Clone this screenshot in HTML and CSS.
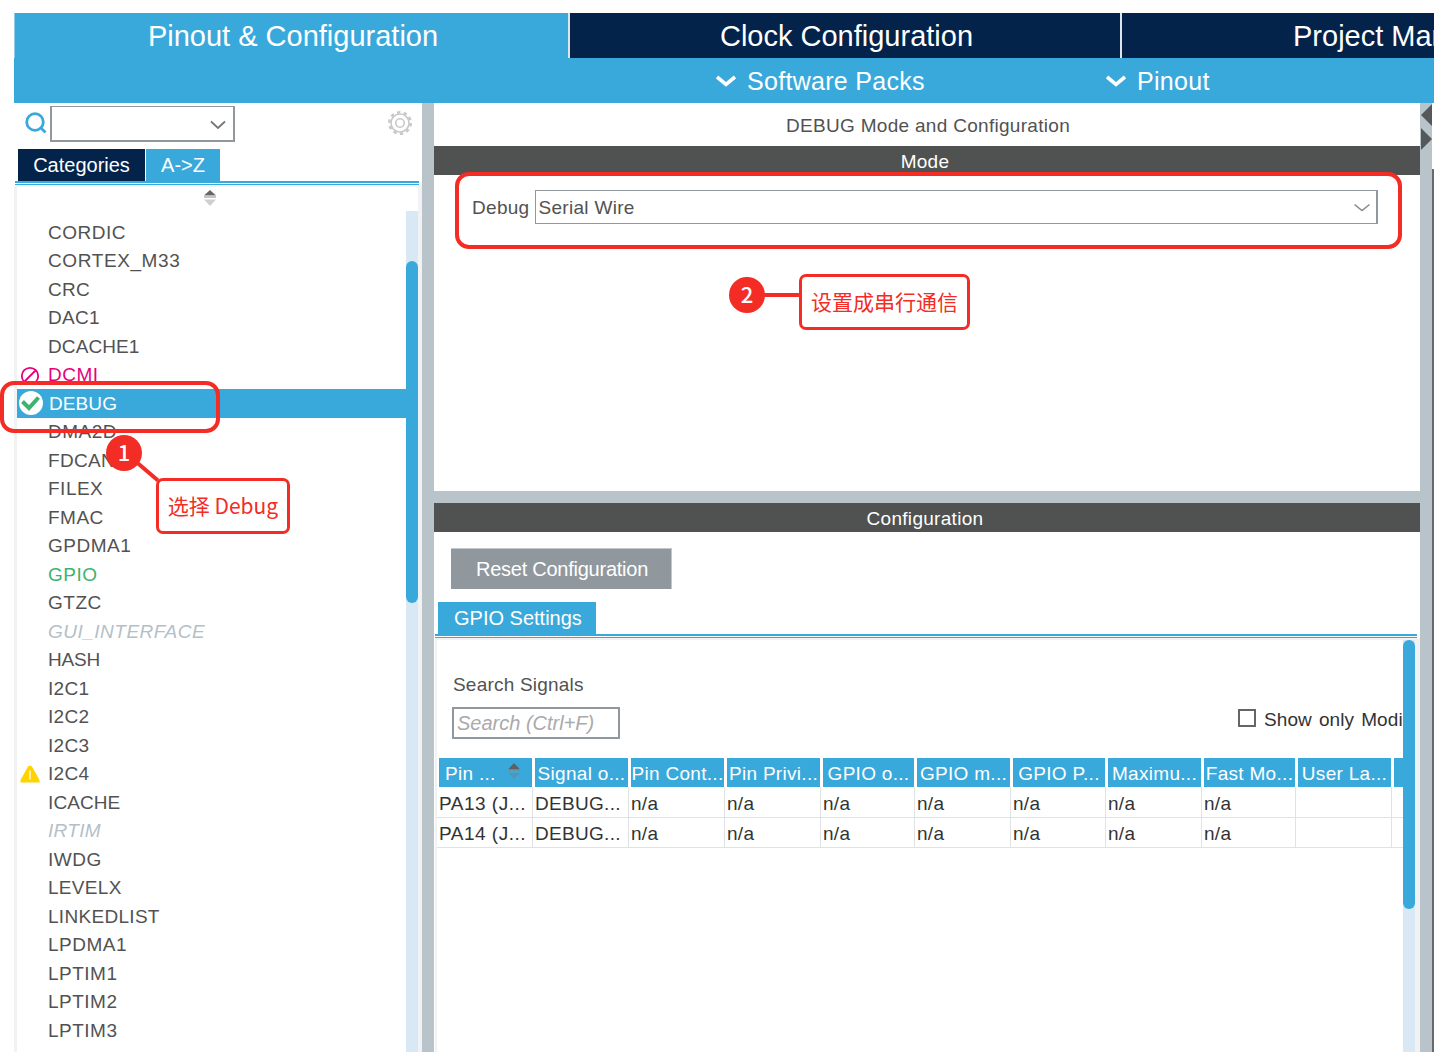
FILE: index.html
```html
<!DOCTYPE html>
<html lang="zh-CN">

<head>
    <meta charset="UTF-8">
    <title>Pinout &amp; Configuration</title>
    <link rel="stylesheet" href="styles.css">
</head>

<body>
    <div class="window">
        <div class="main-tabs">
            <div class="main-tab active">Pinout &amp; Configuration</div>
            <div class="main-tab clock">Clock Configuration</div>
            <div class="main-tab project">Project Manager</div>
        </div>
        <div class="sub-bar">
            <div class="menu packs">
                <svg width="20" height="13" viewBox="0 0 20 13"><path d="M1 2 L10 9.5 L19 2" fill="none" stroke="#fff" stroke-width="3.6"/></svg>
                <span>Software Packs</span>
            </div>
            <div class="menu">
                <svg width="20" height="13" viewBox="0 0 20 13"><path d="M1 2 L10 9.5 L19 2" fill="none" stroke="#fff" stroke-width="3.6"/></svg>
                <span>Pinout</span>
            </div>
        </div>

        <div class="panes">
            <div class="left">
                <div class="finder">
                    <svg class="magnifier" width="22" height="22" viewBox="0 0 22 22"><circle cx="10" cy="10" r="8.3" fill="none" stroke="#39a9dc" stroke-width="2.8"/><path d="M15 15 L20.5 20.5" stroke="#39a9dc" stroke-width="2.6"/></svg>
                    <div class="finder-box">
                        <svg width="16" height="10" viewBox="0 0 16 10"><path d="M1 1.5 L8 8 L15 1.5" fill="none" stroke="#777" stroke-width="1.8"/></svg>
                    </div>
                    <svg class="gear" width="26" height="26" viewBox="-13 -13 26 26"><circle r="9" fill="none" stroke="#c9c9c9" stroke-width="1.6"/><circle r="10.7" fill="none" stroke="#c9c9c9" stroke-width="2.6" stroke-dasharray="3.4 3.323"/><circle r="4.2" fill="none" stroke="#c9c9c9" stroke-width="1.6"/></svg>
                </div>
                <div class="small-tabs">
                    <div class="small-tab navy">Categories</div>
                    <div class="small-tab">A-&gt;Z</div>
                </div>
                <div class="tab-lines"></div>
                <div class="list-area">
                    <div class="sorter">
                        <svg width="14" height="17" viewBox="0 0 14 17"><path d="M7 0 L13 5.5 H1 Z" fill="#666"/><path d="M1 5.5 H13 V8 H1 Z" fill="#c4c4c4"/><path d="M1 9.5 H13 L7 16 Z" fill="#d0d0d0"/></svg>
                    </div>
                    <div class="scroll-row">
                        <div class="list">
                            <div class="item s4">CORDIC</div>
                            <div class="item s5">CORTEX_M33</div>
                            <div class="item">CRC</div>
                            <div class="item">DAC1</div>
                            <div class="item s1">DCACHE1</div>
                            <div class="item s4 pink"><svg class="mark" width="20" height="20" viewBox="0 0 20 20"><circle cx="10" cy="10" r="8.2" fill="none" stroke="#e6007e" stroke-width="1.8"/><path d="M4 16 L16 4" stroke="#e6007e" stroke-width="1.8"/></svg>DCMI</div>
                            <div class="item s1 selected"><svg class="mark check" width="24" height="24" viewBox="0 0 24 24"><circle cx="12" cy="12" r="12" fill="#fff"/><path d="M3.5 10.5 L10 17 L19.5 6.5" fill="none" stroke="#3cb371" stroke-width="4"/></svg>DEBUG</div>
                            <div class="item s4">DMA2D</div>
                            <div class="item">FDCAN1</div>
                            <div class="item s4">FILEX</div>
                            <div class="item s4">FMAC</div>
                            <div class="item s4">GPDMA1</div>
                            <div class="item s4 green">GPIO</div>
                            <div class="item s4">GTZC</div>
                            <div class="item s4 off">GUI_INTERFACE</div>
                            <div class="item s0">HASH</div>
                            <div class="item">I2C1</div>
                            <div class="item">I2C2</div>
                            <div class="item">I2C3</div>
                            <div class="item"><svg class="mark" width="20" height="18" viewBox="0 0 20 18"><path d="M10 0.5 L12 1.5 L19.5 15 V17.5 H0.5 V15 L8 1.5 Z" fill="#ffd200"/><path d="M10 5.5 V14.5" stroke="#fff" stroke-width="1.3"/></svg>I2C4</div>
                            <div class="item s1">ICACHE</div>
                            <div class="item off">IRTIM</div>
                            <div class="item s4">IWDG</div>
                            <div class="item">LEVELX</div>
                            <div class="item">LINKEDLIST</div>
                            <div class="item s4">LPDMA1</div>
                            <div class="item s4">LPTIM1</div>
                            <div class="item s4">LPTIM2</div>
                            <div class="item s4">LPTIM3</div>
                        </div>
                        <div class="track"><div class="thumb"></div></div>
                    </div>
                </div>
            </div>

            <div class="divider"></div>

            <div class="center">
                <div class="title">DEBUG Mode and Configuration</div>
                <div class="bar mode-bar">Mode</div>
                <div class="mode">
                    <span>Debug</span>
                    <div class="select">
                        <span>Serial Wire</span>
                        <svg width="16" height="9" viewBox="0 0 16 9"><path d="M0.5 1.5 L8 7.5 L15.5 1.5" fill="none" stroke="#888" stroke-width="1.5"/></svg>
                    </div>
                </div>
                <div class="split"></div>
                <div class="bar">Configuration</div>
                <div class="config">
                    <div class="reset">Reset Configuration</div>
                    <div class="gpio-tab">GPIO Settings</div>
                    <div class="tab-lines gpio-lines"></div>
                    <div class="gpio">
                        <div class="gpio-body">
                            <div class="search-label">Search Signals</div>
                            <div class="search-line">
                                <div class="search">Search (Ctrl+F)</div>
                                <div class="only"><i class="box"></i><span>Show only Modi</span></div>
                            </div>
                            <div class="grid head">
                                <div class="first"><span>Pin ...</span><svg width="14" height="17" viewBox="0 0 14 17"><path d="M7 0 L13 6.5 H1 Z" fill="#5c6266"/><path d="M1 6.5 H13 V8 H1 Z" fill="#6796ad"/><path d="M1 10 H13 L7 16 Z" fill="#5395b7"/></svg></div>
                                <div>Signal o...</div>
                                <div>Pin Cont...</div>
                                <div>Pin Privi...</div>
                                <div>GPIO o...</div>
                                <div>GPIO m...</div>
                                <div>GPIO P...</div>
                                <div>Maximu...</div>
                                <div>Fast Mo...</div>
                                <div>User La...</div>
                                <div></div>
                            </div>
                            <div class="grid row">
                                <div>PA13 (J...</div><div>DEBUG...</div><div>n/a</div><div>n/a</div><div>n/a</div><div>n/a</div><div>n/a</div><div>n/a</div><div>n/a</div><div></div><div></div>
                            </div>
                            <div class="grid row">
                                <div>PA14 (J...</div><div>DEBUG...</div><div>n/a</div><div>n/a</div><div>n/a</div><div>n/a</div><div>n/a</div><div>n/a</div><div>n/a</div><div></div><div></div>
                            </div>
                        </div>
                        <div class="track"><div class="thumb gpio-thumb"></div></div>
                    </div>
                </div>
            </div>

            <div class="divider">
                <svg width="12" height="48" viewBox="0 0 12 48"><path d="M12 1 V23 L1 12 Z M1 25 V47 L12 36 Z" fill="#55585a"/></svg>
            </div>
            <div class="edge"></div>
        </div>
    </div>

    <!-- notes -->
    <div class="frame frame-debug"></div>
    <div class="frame frame-mode"></div>
    <svg class="connector" width="60" height="50" viewBox="0 0 60 50"><path d="M14 9 L38 29.5" stroke="#f32c25" stroke-width="4"/></svg>
    <div class="num num-1">1</div>
    <div class="note note-1">选择 Debug</div>
    <div class="wire"></div>
    <div class="num num-2">2</div>
    <div class="note note-2">设置成串行通信</div>
</body>

</html>
```

FILE: styles.css
```css
body {
    margin: 0;
    height: 1052px;
    overflow: hidden;
    position: relative;
    background: #fff;
    color: #525252;
    font-family: "Liberation Sans", Arial, sans-serif;
    font-size: 19px;
    letter-spacing: 0.3px;
}

div {
    box-sizing: border-box;
    white-space: nowrap;
}

svg {
    display: block;
    flex: none;
}

.window {
    padding: 13px 0 0 14px;
    width: 1434px;
    height: 1052px;
    overflow: hidden;
    display: flex;
    flex-direction: column;
}

/* top bars */
.main-tabs {
    display: flex;
    height: 45px;
    flex: none;
    font-size: 29px;
    line-height: 46px;
    letter-spacing: 0;
    color: #fff;
}

.main-tab {
    width: 552px;
    flex: none;
    background: #03234b;
    text-align: center;
    border-right: 2px solid #dfe5e9;
    padding-left: 3px;
}

.main-tab.active {
    width: 556px;
    background: #39a9dc;
    border-left: 1px solid #8fcbe6;
}

.main-tab.project {
    border: 0;
    text-align: left;
    padding-left: 171px;
}

.sub-bar {
    height: 45px;
    flex: none;
    display: flex;
    background: #39a9dc;
    color: #fff;
    font-size: 25px;
    line-height: 47px;
    padding-left: 702px;
}

.menu {
    display: flex;
    gap: 11px;
}

.menu svg {
    margin-top: 17px;
}

.menu.packs {
    width: 390px;
}

.panes {
    display: flex;
    flex: 1;
    min-height: 0;
}

.divider {
    width: 12px;
    flex: none;
    background: #b8c4ca;
}

.edge {
    width: 2px;
    margin-top: 66px;
    background: #666a6b;
}

/* left pane */
.left {
    width: 408px;
    flex: none;
    display: flex;
    flex-direction: column;
}

.finder {
    display: flex;
    height: 46px;
    flex: none;
}

.magnifier {
    margin: 9px 0 0 11px;
}

.finder-box {
    width: 185px;
    height: 36px;
    margin: 3px 0 0 3px;
    border: 2px solid #90989e;
    border-top-width: 1px;
    display: flex;
    justify-content: flex-end;
    padding: 13px 7px 0 0;
}

.gear {
    margin: 7px 0 0 152px;
}

.small-tabs {
    display: flex;
    gap: 1px;
    height: 32px;
    flex: none;
    padding-left: 4px;
}

.small-tab {
    width: 74px;
    background: #39a9dc;
    color: #fff;
    font-size: 20px;
    letter-spacing: 0;
    line-height: 33px;
    text-align: center;
}

.small-tab.navy {
    width: 127px;
    background: #03234b;
}

.tab-lines {
    height: 4px;
    flex: none;
    margin: 0 3px 0 1px;
    border-top: 2px solid #39a9dc;
    border-bottom: 1px solid #39a9dc;
}

.list-area {
    flex: 1;
    min-height: 0;
    border: 3px solid #f1f2f3;
    border-width: 2px 4px 0 3px;
    display: flex;
    flex-direction: column;
}

.sorter {
    height: 24px;
    flex: none;
    padding: 3px 0 0 186px;
}

.scroll-row {
    display: flex;
    flex: 1;
    min-height: 0;
}

.list {
    width: 389px;
    padding-top: 7.5px;
}

.item {
    height: 28.5px;
    line-height: 27px;
    padding-left: 31px;
    position: relative;
}

.item.s0 {
    letter-spacing: -0.2px;
}

.item.s1 {
    letter-spacing: 0.1px;
}

.item.s4 {
    letter-spacing: 0.5px;
}

.item.s5 {
    letter-spacing: 0.6px;
}

.item.pink {
    color: #e6007e;
}

.item.green {
    color: #3cb371;
}

.item.off {
    color: #b4c0c7;
    font-style: italic;
}

.item.selected {
    background: #39a9dc;
    box-shadow: 0 -1px 0 #39a9dc;
    color: #fff;
    padding-left: 32px;
}

.mark {
    position: absolute;
    left: 3px;
    top: 5px;
}

.mark.check {
    left: 2px;
    top: 1px;
}

.track {
    width: 12px;
    flex: none;
    background: #d9e8f5;
}

.thumb {
    height: 342px;
    margin-top: 50px;
    border-radius: 6px;
    background: #39a9dc;
}

/* center pane */
.center {
    width: 986px;
    flex: none;
    display: flex;
    flex-direction: column;
}

.title {
    height: 43px;
    line-height: 45px;
    padding-left: 352px;
    flex: none;
}

.bar {
    height: 29px;
    line-height: 31px;
    flex: none;
    background: #505251;
    color: #fff;
    text-align: center;
    padding-right: 4px;
}

.mode {
    height: 316px;
    flex: none;
    display: flex;
    padding: 15px 0 0 38px;
    line-height: 35px;
}

.select {
    width: 843px;
    height: 34px;
    margin-left: 5px;
    border: 1px solid #90989e;
    border-right-width: 2px;
    display: flex;
    justify-content: space-between;
    padding: 0 6px 0 3px;
    line-height: 33px;
}

.select svg {
    margin-top: 12px;
}

.split {
    height: 12px;
    flex: none;
    background: #b8c4ca;
}

.config {
    flex: 1;
    min-height: 0;
    display: flex;
    flex-direction: column;
}

.reset {
    width: 221px;
    height: 41px;
    flex: none;
    margin: 16px 0 0 17px;
    background: #90989e;
    border-top: 1px solid #c3c7ca;
    border-right: 1px solid #c3c7ca;
    color: #fff;
    font-size: 20px;
    letter-spacing: -0.25px;
    line-height: 41px;
    padding-left: 25px;
}

.gpio-tab {
    width: 158px;
    height: 32px;
    flex: none;
    margin: 13px 0 0 4px;
    background: #39a9dc;
    color: #fff;
    font-size: 20px;
    letter-spacing: 0;
    line-height: 33px;
    padding-left: 16px;
}

.gpio {
    flex: 1;
    min-height: 0;
    display: flex;
    margin-left: 1px;
    border: 2px solid #f1f2f3;
    border-width: 2px 5px 0 2px;
}

.gpio-body {
    width: 966px;
    flex: none;
    overflow: hidden;
}

.gpio-thumb {
    height: 269px;
    margin-top: 0;
}

.search-label {
    margin: 34px 0 0 16px;
    line-height: 22px;
    letter-spacing: 0.2px;
}

.search-line {
    display: flex;
    margin: 11px 0 0 15px;
}

.search {
    width: 168px;
    height: 32px;
    flex: none;
    border: 2px solid #90989e;
    color: #aaa;
    font-size: 20px;
    font-style: italic;
    letter-spacing: 0;
    line-height: 29px;
    padding-left: 3px;
}

.only {
    display: flex;
    margin-left: 618px;
    gap: 8px;
    line-height: 25px;
    letter-spacing: 0.1px;
    word-spacing: 1.6px;
    color: #333;
}

.box {
    box-sizing: border-box;
    width: 18px;
    height: 18px;
    flex: none;
    margin-top: 2px;
    border: 2px solid #666;
}

.grid {
    display: grid;
    width: 1051px;
    grid-template-columns: 96px 96px 96px 96px 94px 96px 95px 96px 94px 96px 96px;
    grid-template-rows: 100%;
}

.head {
    margin-top: 19px;
    height: 29px;
    padding-left: 2px;
    color: #fff;
    line-height: 31px;
}

.head div {
    background: #39a9dc;
    margin-right: 3px;
    text-align: center;
}

.head .first {
    display: flex;
    padding: 0 11px 0 6px;
    justify-content: space-between;
}

.head svg {
    margin-top: 5px;
}

.row {
    height: 30px;
    line-height: 33px;
    color: #333;
}

.row + .row {
    line-height: 32px;
}

.head + .row {
    height: 31px;
}

.row div {
    border-right: 1px solid #dfe3e6;
    border-bottom: 1px solid #dfe3e6;
    padding-left: 2px;
}

.row div:first-child {
    letter-spacing: 0.5px;
}

/* notes over the window */
.frame {
    position: absolute;
    border: 4px solid #f32c25;
    border-radius: 14px;
}

.frame-debug {
    left: 0;
    top: 381px;
    width: 220px;
    height: 52px;
}

.frame-mode {
    left: 455px;
    top: 172px;
    width: 947px;
    height: 77px;
}

.num,
.note {
    position: absolute;
    font-family: "Noto Sans CJK SC", sans-serif;
    letter-spacing: 0;
}

.num {
    width: 36px;
    height: 36px;
    border-radius: 50%;
    background: #f32c25;
    color: #fff;
    font-size: 22px;
    font-weight: 500;
    line-height: 32px;
    text-align: center;
}

.num-1 {
    left: 106px;
    top: 435px;
}

.num-2 {
    left: 729px;
    top: 277px;
}

.note {
    height: 56px;
    border: 3px solid #f32c25;
    border-radius: 7px;
    background: #fff;
    color: #f32c25;
    font-size: 21px;
    line-height: 48px;
    text-align: center;
}

.note-1 {
    left: 156px;
    top: 478px;
    width: 134px;
}

.note-2 {
    left: 799px;
    top: 274px;
    width: 171px;
}

.connector {
    position: absolute;
    left: 120px;
    top: 451px;
}

.wire {
    position: absolute;
    left: 760px;
    top: 293px;
    width: 40px;
    height: 4px;
    background: #f32c25;
}
```
